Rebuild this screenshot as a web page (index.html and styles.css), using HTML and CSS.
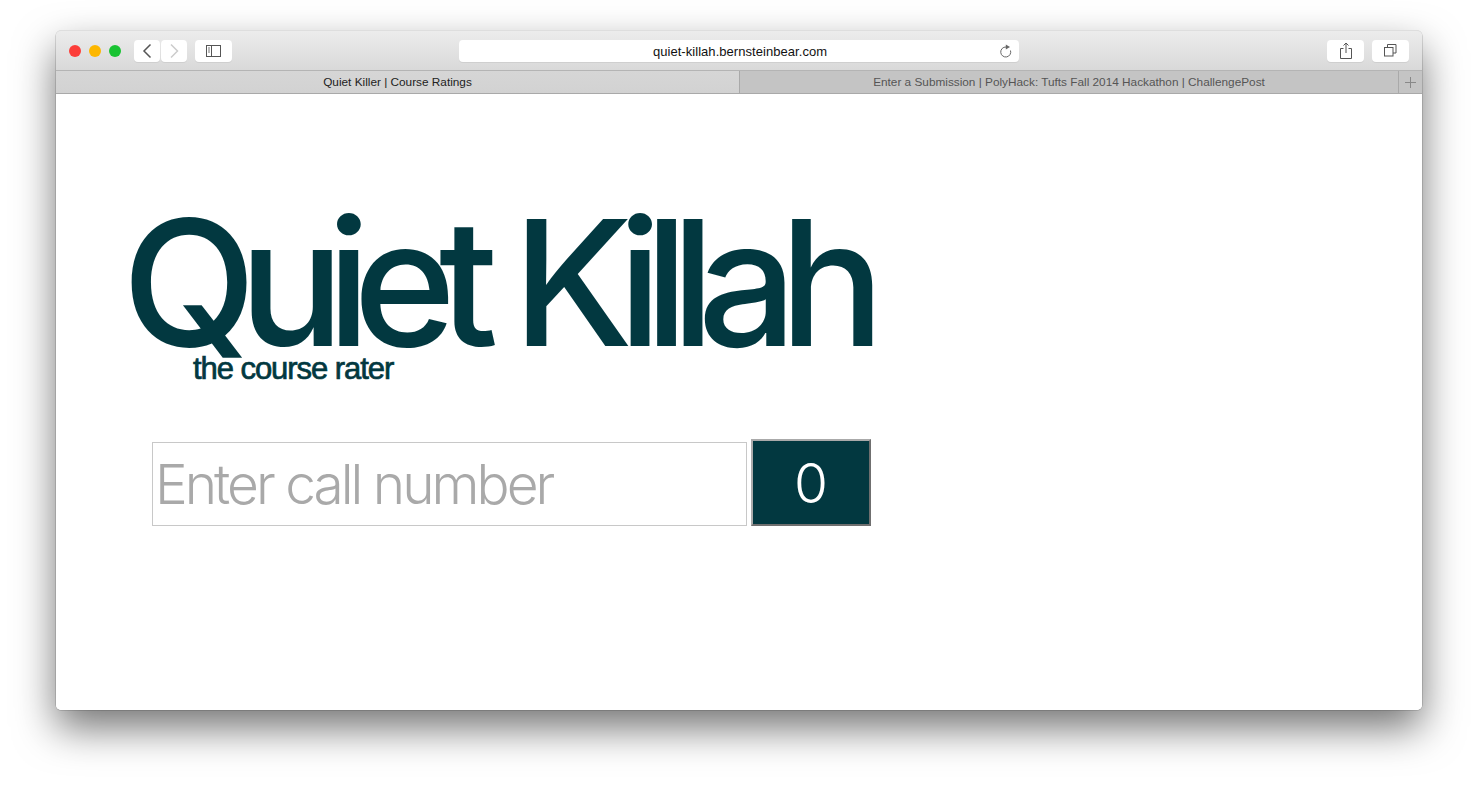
FILE: index.html
```html
<!DOCTYPE html>
<html lang="en">
<head>
    <meta charset="UTF-8">
    <title>Quiet Killer | Course Ratings</title>
    <link rel="stylesheet" href="styles.css">
</head>
<body>
    <div class="window">
        <!-- Toolbar -->
        <div class="toolbar">
            <div class="lights">
                <span class="light red"></span>
                <span class="light yellow"></span>
                <span class="light green"></span>
            </div>
            <div class="nav-group">
                <div class="tool nav-btn">
                    <svg width="12" height="16" viewBox="0 0 12 16"><path d="M9.500 1.500 3 8l6.500 6.500" fill="none" stroke="#555" stroke-width="1.500"/></svg>
                </div>
                <div class="tool nav-btn">
                    <svg width="12" height="16" viewBox="0 0 12 16"><path d="M3 1.500 9.500 8 3 14.500" fill="none" stroke="#ccc" stroke-width="1.500"/></svg>
                </div>
            </div>
            <div class="tool side-btn">
                <svg width="16" height="12" viewBox="0 0 16 12"><rect x=".5" y=".5" width="14" height="11" fill="none" stroke="#555"/><path d="M5.500 .5v11" stroke="#555" fill="none"/><path d="M2 3h2M2 5h2M2 7h2" stroke="#777" fill="none"/></svg>
            </div>
            <div class="address">
                <span>quiet-killah.bernsteinbear.com</span>
                <svg class="reload" width="14" height="14" viewBox="0 0 14 14"><path d="M11.500 6.500A5 5 0 1 1 7 3" fill="none" stroke="#666" stroke-width="1"/><path d="M6.800 .5v5l4.200-2.500z" fill="#666"/></svg>
            </div>
            <div class="tool right-btn share">
                <svg width="12" height="17" viewBox="0 0 12 17"><path d="M3.500 6.500H.5v10h11v-10h-3" fill="none" stroke="#555"/><path d="M6 11V1M3.500 3.500 6 1l2.500 2.500" fill="none" stroke="#555"/></svg>
            </div>
            <div class="tool right-btn">
                <svg width="13" height="13" viewBox="0 0 13 13"><rect x=".5" y="3.500" width="8.500" height="8.500" fill="none" stroke="#555"/><path d="M3.500 3.500v-3h8.500v8.500H9" fill="none" stroke="#555"/></svg>
            </div>
        </div>

        <!-- Tabs -->
        <div class="tabs">
            <div class="tab active">Quiet Killer | Course Ratings</div>
            <div class="tab">Enter a Submission | PolyHack: Tufts Fall 2014 Hackathon | ChallengePost</div>
            <div class="new-tab">
                <svg width="11" height="11" viewBox="0 0 11 11"><path d="M5.500 0v11M0 5.500h11" stroke="#888" fill="none"/></svg>
            </div>
        </div>

        <!-- Page -->
        <div class="page">
            <h1 class="title">Quiet Killah</h1>
            <p class="subtitle">the course rater</p>
            <form class="search">
                <input class="call-input" type="text" placeholder="Enter call number">
                <button class="count-btn" type="button">0</button>
            </form>
        </div>
    </div>
</body>
</html>
```

FILE: styles.css
```css
html, body {
    height: 100%;
}
body {
    margin: 0;
    padding: 31px 56px 80px;
    box-sizing: border-box;
    background-color: #fff;
    font-family: 'Liberation Sans', Arial, sans-serif;
    overflow: hidden;
}
.window {
    height: 679px;
    display: flex;
    flex-direction: column;
    background-color: #fff;
    border-radius: 5px;
    box-shadow: 0 0 0 .5px rgba(0, 0, 0, 0.25), 0 18px 40px rgba(0, 0, 0, 0.55);
}

/* Toolbar */
.toolbar {
    height: 39px;
    flex: none;
    display: flex;
    align-items: center;
    padding: 0 13px;
    background: linear-gradient(#ececec, #d9d9d9);
    border-top: 1px solid #dedede;
    border-bottom: 1px solid #b4b4b4;
    border-radius: 5px 5px 0 0;
    margin-top: -1px;
}
.lights {
    display: flex;
    gap: 8px;
    width: 65px;
}
.light {
    width: 12px;
    height: 12px;
    border-radius: 50%;
}
.red { background-color: #fc3d39; }
.yellow { background-color: #fdb700; }
.green { background-color: #19c332; }
.tool {
    height: 22px;
    display: flex;
    align-items: center;
    justify-content: center;
    background-color: #fff;
    border-radius: 4px;
    box-shadow: 0 1px 0 #cfcfcf;
}
.nav-group {
    display: flex;
    gap: 1px;
}
.nav-btn {
    width: 26px;
}
.side-btn {
    width: 37px;
    margin-left: 8px;
}
.address {
    position: relative;
    width: 560px;
    height: 22px;
    margin-left: 227px;
    display: flex;
    align-items: center;
    justify-content: center;
    background-color: #fff;
    border-radius: 4px;
    box-shadow: 0 1px 0 #cfcfcf;
    font-size: 13px;
    letter-spacing: .05px;
    color: #111;
}
.address span {
    margin: 1px 0 0 2px;
}
.reload {
    position: absolute;
    right: 6px;
    top: 4px;
}
.right-btn {
    width: 37px;
    margin-left: 8px;
}
.share {
    margin-left: auto;
}

/* Tabs */
.tabs {
    height: 22px;
    flex: none;
    display: flex;
    font-size: 11.800px;
    background-color: #c4c4c4;
    border-bottom: 1px solid #a9a9a9;
}
.tab {
    flex: 1;
    display: flex;
    align-items: center;
    justify-content: center;
    color: #555;
    border-right: 1px solid #a9a9a9;
}
.tab.active {
    flex: none;
    width: 683px;
    color: #222;
    background: linear-gradient(#d6d6d6, #d2d2d2);
}
.new-tab {
    width: 23px;
    flex: none;
    display: flex;
    align-items: center;
    justify-content: center;
}

/* Page */
.page {
    flex: 1;
    padding: 0 0 0 74px;
    background-color: #fff;
    border-radius: 0 0 5px 5px;
    color: #023840;
}
.title {
    margin: 88px 0 0 -8px;
    font-family: 'Inter', sans-serif;
    font-size: 175px;
    font-weight: 500;
    line-height: 200px;
    letter-spacing: -17.500px;
    word-spacing: 3px;
    white-space: nowrap;
}
.subtitle {
    margin: -31px 0 0 63px;
    font-size: 31px;
    line-height: 36px;
    letter-spacing: -1.060px;
    -webkit-text-stroke: .7px #023840;
}
.search {
    display: flex;
    align-items: flex-end;
    gap: 4px;
    margin: 52px 0 0 22px;
}
.call-input {
    width: 595px;
    height: 84px;
    padding: 0 2px;
    box-sizing: border-box;
    border: 1px solid #c8c8c8;
    font-family: 'Inter', sans-serif;
    font-weight: 300;
    font-size: 55px;
    letter-spacing: -3px;
    outline: none;
}
.call-input::placeholder {
    color: #a9a9a9;
    opacity: 1;
}
.count-btn {
    width: 120px;
    height: 87px;
    box-sizing: border-box;
    border: 2px solid;
    border-color: #aaa #6f6f6f #6f6f6f #aaa;
    background-color: #023840;
    color: #fff;
    font-family: 'Inter', sans-serif;
    font-weight: 300;
    font-size: 55px;
    padding: 0;
}
```
